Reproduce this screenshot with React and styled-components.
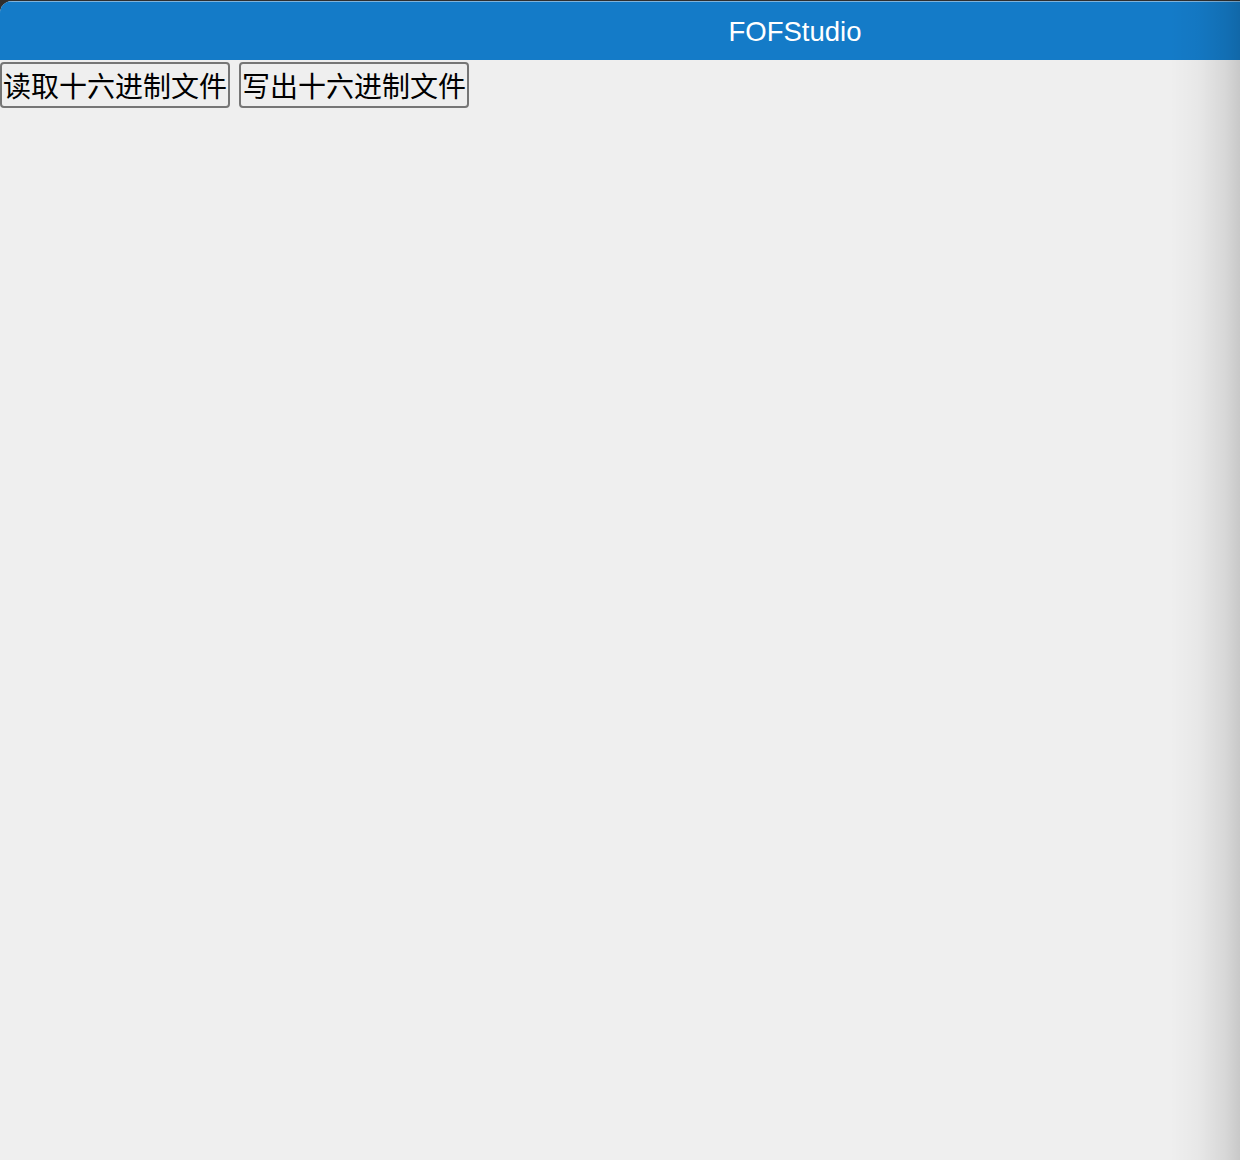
import React from "react";
import styled, { createGlobalStyle } from "styled-components";

const GlobalStyle = createGlobalStyle`
  html, body {
    margin: 0;
    padding: 0;
    background: #2f2f2f;
    overflow: hidden;
  }
  #root {
    min-height: 100vh;
  }
`;

const Screen = styled.div`
  position: relative;
  height: 1160px;
  padding-top: 1px;
  box-sizing: border-box;
  overflow: hidden;
`;

const Window = styled.div`
  width: 1590px;
  height: 100%;
  background: #efefef;
  border-top-left-radius: 12px;
  overflow: hidden;
  display: flex;
  flex-direction: column;
`;

const TitleBar = styled.div`
  height: 59px;
  flex-shrink: 0;
  box-sizing: border-box;
  border-top: 1px solid #7fb3dc;
  background: #147bc8;
  color: #ffffff;
  display: flex;
  align-items: center;
  justify-content: center;
  font-family: "Liberation Sans", Arial, sans-serif;
  font-size: 27.5px;
  padding-top: 2px;
`;

const Toolbar = styled.div`
  display: flex;
  gap: 9px;
  padding-top: 2px;
`;

const Button = styled.button`
  font-family: "Noto Sans CJK SC", "Noto Sans", sans-serif;
  font-size: 28px;
  line-height: 42px;
  color: #000;
  background: #efefef;
  border: 2px solid #767676;
  border-radius: 4px;
  padding: 0 1px;
  margin: 0;
  cursor: pointer;
`;

const EdgeShade = styled.div`
  position: absolute;
  top: 0;
  right: 0;
  width: 70px;
  height: 100%;
  pointer-events: none;
  background: linear-gradient(
    to right,
    rgba(0, 0, 0, 0) 0%,
    rgba(0, 0, 0, 0.03) 40%,
    rgba(0, 0, 0, 0.1) 80%,
    rgba(0, 0, 0, 0.16) 100%
  );
`;

export default function App() {
  return (
    <>
      <GlobalStyle />
      <Screen>
        <Window>
          <TitleBar>FOFStudio</TitleBar>
          <Toolbar>
            <Button>读取十六进制文件</Button>
            <Button>写出十六进制文件</Button>
          </Toolbar>
        </Window>
        <EdgeShade />
      </Screen>
    </>
  );
}
